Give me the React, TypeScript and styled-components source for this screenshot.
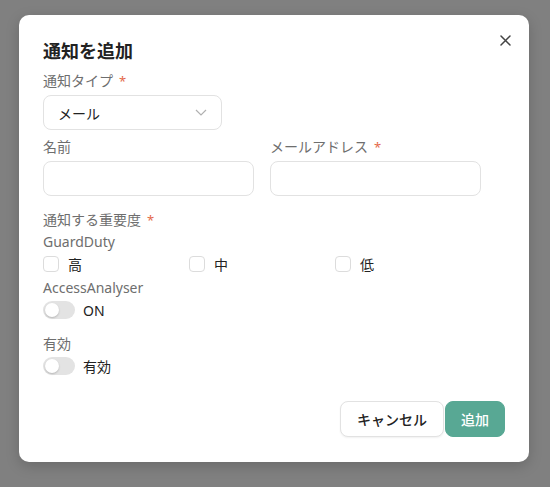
import React from "react";
import styled, { createGlobalStyle } from "styled-components";

const Global = createGlobalStyle`
  html, body { margin: 0; padding: 0; }
  body {
    font-family: "Noto Sans", "Noto Sans CJK JP", sans-serif;
    background: #808080;
  }
  * { box-sizing: border-box; }
`;

const Overlay = styled.div`
  width: 550px;
  height: 487px;
  background: #808080;
  padding: 15px 21px 0 19px;
`;

const Modal = styled.div`
  position: relative;
  width: 510px;
  height: 447px;
  background: #ffffff;
  border-radius: 10px;
  box-shadow: 0 4px 14px rgba(0, 0, 0, 0.18);
  padding: 22px 24px 25px 24px;
  display: flex;
  flex-direction: column;
`;

const Title = styled.h2`
  margin: 0 0 8px 0;
  font-size: 18px;
  line-height: 26px;
  font-weight: 700;
  color: #222;
  font-family: "Noto Sans CJK JP", sans-serif;
`;

const Close = styled.button`
  position: absolute;
  top: 17px;
  right: 16px;
  width: 16px;
  height: 16px;
  padding: 0;
  border: none;
  background: transparent;
  display: flex;
  align-items: center;
  justify-content: center;
  cursor: pointer;
`;

const Label = styled.div<{ $mb?: number; $mt?: number }>`
  font-size: 14px;
  line-height: 20px;
  color: #6e6e6e;
  margin-top: ${(p) => p.$mt ?? 0}px;
  margin-bottom: ${(p) => p.$mb ?? 0}px;
  font-family: "Noto Sans", "Noto Sans CJK JP", sans-serif;
`;

const Req = styled.span`
  color: #e4684a;
  margin-left: 6px;
  font-size: 13px;
`;

const Select = styled.div`
  width: 179px;
  height: 35px;
  border: 1px solid #e2e2e2;
  border-radius: 8px;
  display: flex;
  align-items: center;
  justify-content: space-between;
  padding: 0 14px 0 14px;
  font-size: 14px;
  color: #222;
  font-family: "Noto Sans CJK JP", sans-serif;
`;

const Row2 = styled.div`
  display: grid;
  grid-template-columns: 211px 211px;
  column-gap: 16px;
  margin-top: 7px;
`;

const Field = styled.div`
  display: flex;
  flex-direction: column;
`;

const Input = styled.input`
  width: 211px;
  height: 35px;
  border: 1px solid #e2e2e2;
  border-radius: 8px;
  margin-top: 4px;
  outline: none;
  padding: 0 12px;
  font-size: 14px;
`;

const CheckRow = styled.div`
  display: grid;
  grid-template-columns: 146px 146px 146px;
  margin-top: 2px;
  height: 20px;
`;

const CheckItem = styled.label`
  display: flex;
  align-items: center;
  gap: 9px;
  font-size: 14px;
  color: #222;
  font-family: "Noto Sans CJK JP", sans-serif;
`;

const Box = styled.span`
  width: 16px;
  height: 16px;
  border: 1px solid #dcdcdc;
  border-radius: 4px;
  background: #fff;
`;

const SwitchRow = styled.div<{ $mt?: number }>`
  display: flex;
  align-items: center;
  gap: 8px;
  height: 20px;
  margin-top: ${(p) => p.$mt ?? 2}px;
  font-size: 14px;
  color: #222;
  font-family: "Noto Sans", "Noto Sans CJK JP", sans-serif;
`;

const Track = styled.span`
  width: 32px;
  height: 18px;
  border-radius: 9px;
  background: #e3e3e3;
  display: flex;
  align-items: center;
  padding: 2px;
`;

const Knob = styled.span`
  width: 14px;
  height: 14px;
  border-radius: 50%;
  background: #fff;
  box-shadow: 0 1px 2px rgba(0, 0, 0, 0.2);
`;

const Footer = styled.div`
  margin-top: auto;
  display: flex;
  justify-content: flex-end;
  gap: 1px;
`;

const Button = styled.button<{ $primary?: boolean }>`
  height: 36px;
  padding: 0 ${(p) => (p.$primary ? 15 : 16)}px;
  border-radius: 8px;
  font-size: 14px;
  font-weight: 500;
  font-family: "Noto Sans CJK JP", sans-serif;
  cursor: pointer;
  border: 1px solid ${(p) => (p.$primary ? "#58a894" : "#e2e2e2")};
  background: ${(p) => (p.$primary ? "#58a894" : "#ffffff")};
  color: ${(p) => (p.$primary ? "#ffffff" : "#222222")};
  box-shadow: ${(p) => (p.$primary ? "none" : "0 1px 2px rgba(0,0,0,0.06)")};
`;

const Switch = () => (
  <Track>
    <Knob />
  </Track>
);

export default function App() {
  return (
    <>
      <Global />
      <Overlay>
        <Modal>
          <Close aria-label="close">
            <svg width="11" height="11" viewBox="0 0 11 11">
              <path d="M1 1L10 10M10 1L1 10" stroke="#444" strokeWidth="1.5" strokeLinecap="round" />
            </svg>
          </Close>
          <Title>通知を追加</Title>
          <Label $mb={4}>
            通知タイプ<Req>*</Req>
          </Label>
          <Select>
            <span>メール</span>
            <svg width="12" height="7" viewBox="0 0 12 7">
              <path d="M1 1L6 6L11 1" stroke="#b0b0b0" strokeWidth="1.2" fill="none" />
            </svg>
          </Select>
          <Row2>
            <Field>
              <Label>名前</Label>
              <Input />
            </Field>
            <Field>
              <Label>
                メールアドレス<Req>*</Req>
              </Label>
              <Input />
            </Field>
          </Row2>
          <Label $mt={14}>
            通知する重要度<Req>*</Req>
          </Label>
          <Label $mt={2}>GuardDuty</Label>
          <CheckRow>
            <CheckItem>
              <Box />高
            </CheckItem>
            <CheckItem>
              <Box />中
            </CheckItem>
            <CheckItem>
              <Box />低
            </CheckItem>
          </CheckRow>
          <Label $mt={4}>AccessAnalyser</Label>
          <SwitchRow>
            <Switch />
            ON
          </SwitchRow>
          <Label $mt={14}>有効</Label>
          <SwitchRow>
            <Switch />
            有効
          </SwitchRow>
          <Footer>
            <Button>キャンセル</Button>
            <Button $primary>追加</Button>
          </Footer>
        </Modal>
      </Overlay>
    </>
  );
}
